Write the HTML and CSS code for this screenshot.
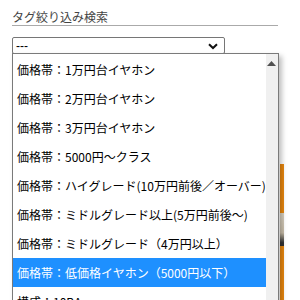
FILE: index.html
```html
<!DOCTYPE html>
<html lang="ja">
<head>
<meta charset="UTF-8">
<link rel="stylesheet" href="styles.css">
</head>
<body>
<div id="container">
    <h3 class="tagtitle">タグ絞り込み検索</h3>
    <div class="fakeselect">
        <span>---</span>
        <svg class="chev" width="10" height="7" viewBox="0 0 10 7"><path d="M1 1.2 L5 5 L9 1.2" fill="none" stroke="#111" stroke-width="2"/></svg>
    </div>
    <div class="banner"><div class="bannerpic"></div></div>

    <div class="droplist">
        <ul class="options">
            <li>価格帯：1万円台イヤホン</li>
            <li>価格帯：2万円台イヤホン</li>
            <li>価格帯：3万円台イヤホン</li>
            <li>価格帯：5000円～クラス</li>
            <li>価格帯：ハイグレード(10万円前後／オーバー)</li>
            <li>価格帯：ミドルグレード以上(5万円前後～)</li>
            <li>価格帯：ミドルグレード（4万円以上）</li>
            <li class="sel">価格帯：低価格イヤホン（5000円以下）</li>
            <li>構成：10BA</li>
        </ul>
        <div class="scrollbar">
            <svg class="uparrow" width="9" height="5" viewBox="0 0 9 5"><path d="M0 5 L4.5 0 L9 5 Z" fill="#505050"/></svg>
        </div>
    </div>
</div>
</body>
</html>
```

FILE: styles.css
```css
body {
    margin:0px;padding:0px;background-color:#fff;color:#000;
    font-family: "Noto Sans CJK JP", "Liberation Sans", sans-serif;
    font-size: 12px;
}

#container {
    position: relative;
    padding: 10px 0px 0px 12px;
}

.tagtitle {
    margin: 0px;
    width: 266px;
    font-size: 12px;
    font-weight: normal;
    line-height: 14px;
    color: #444;
    padding-bottom: 1px;
    border-bottom: 1px solid #aaa;
}

.fakeselect {
    box-sizing: border-box;
    margin-top: 11px;
    width: 213px;
    height: 17px;
    border: 1px solid #767676;
    border-radius: 2px;
    display: flex;
    align-items: center;
    justify-content: space-between;
    padding: 0px 6px 0px 3px;
    font-family: "Liberation Sans", sans-serif;
    font-size: 12px;
}
.chev { margin-top: 1px; }

.banner {
    margin-top: 110px;
    width: 268px;
    height: 160px;
    border-right: 4px solid #e8870e;
    position: relative;
}
.bannerpic {
    position: absolute;
    right: -4px;
    top: 49px;
    width: 4px;
    height: 33px;
    background: linear-gradient(#d8d0c0, #c8bca8 60%, #333 90%);
}

.droplist {
    position: absolute;
    left: 12px;
    top: 53px;
    width: 267px;
    height: 260px;
    box-sizing: border-box;
    border: 1px solid #7a7a7a;
    background: #fff;
    box-shadow: 3px 3px 5px rgba(0,0,0,0.25);
    display: flex;
}

.options {
    list-style: none;
    margin: 0px;
    padding: 1px 0px 0px 0px;
    flex: 1;
}
.options li {
    height: 29px;
    line-height: 29px;
    padding-left: 4px;
    white-space: nowrap;
    overflow: hidden;
}
.options li.sel {
    background-color: #1e90ff;
    color: #fff;
}

.scrollbar {
    width: 15px;
    background: #f0f0f0;
    display: flex;
    justify-content: center;
}
.uparrow { margin-top: 7px; }
```
